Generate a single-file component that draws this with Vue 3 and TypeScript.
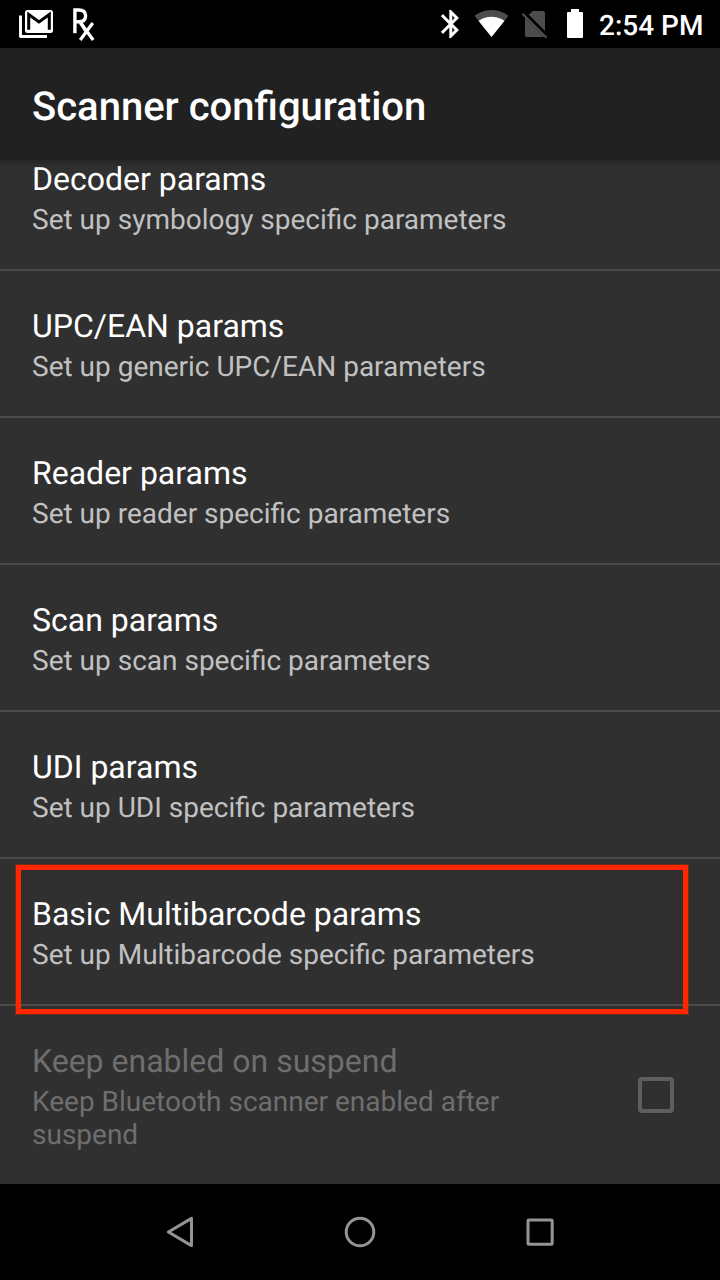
<script setup lang="ts">
interface Preference {
  title: string
  summary: string
  highlighted?: boolean
}

const preferences: Preference[] = [
  { title: 'Decoder params', summary: 'Set up symbology specific parameters' },
  { title: 'UPC/EAN params', summary: 'Set up generic UPC/EAN parameters' },
  { title: 'Reader params', summary: 'Set up reader specific parameters' },
  { title: 'Scan params', summary: 'Set up scan specific parameters' },
  { title: 'UDI params', summary: 'Set up UDI specific parameters' },
  { title: 'Basic Multibarcode params', summary: 'Set up Multibarcode specific parameters', highlighted: true },
]
</script>

<template>
  <div class="screen">
    <header class="status-bar">
      <div class="notifications">
        <svg width="36" height="48" viewBox="18 0 36 48">
          <path d="M20.5 15.5V36.5H47" fill="none" stroke="#fff" stroke-width="2.9" stroke-linejoin="round" />
          <rect x="25" y="10" width="28" height="23" rx="2.5" fill="#fff" />
          <path d="M28.7 29.7V14.5L39 22L49.3 14.5V29.7" fill="none" stroke="#000" stroke-width="3" />
        </svg>
        <svg class="rx" width="26" height="48" viewBox="71 0 26 48" fill="none" stroke="#fff" stroke-width="3.4">
          <path d="M74.9 33.3V10H78.8C83.4 10 85.6 12.2 85.6 15.8S83.4 21.8 78.8 21.8H75M80.2 22L86 31.2" />
          <path stroke-width="3.2" d="M80.2 40L92.8 23M80.6 23L93.2 40" />
        </svg>
      </div>
      <div class="system">
        <svg width="20" height="48" viewBox="440 0 20 48">
          <path transform="translate(434 7.2) scale(1.4)" fill="#fff" stroke="#fff" stroke-width=".2" d="M17.71 7.71L12 2h-1v7.59L6.41 5 5 6.41 10.59 12 5 17.59 6.41 19 11 14.41V22h1l5.71-5.71-4.3-4.29 4.3-4.29zM13 5.83l1.88 1.88L13 9.59V5.83zm1.88 10.46L13 18.17v-3.76l1.88 1.88z" />
        </svg>
        <svg class="wifi" width="36" height="48" viewBox="474 0 36 48">
          <g transform="translate(474 5.6) scale(1.46)">
            <path fill="#4d4d4d" d="M12.01 21.49L23.64 7c-.45-.34-4.93-4-11.64-4C5.28 3 .81 6.66.36 7l11.63 14.49z" />
            <path fill="#fff" d="M3.2 10.6L12 21.5l8.8-10.9C20.2 10.1 16.9 7.7 12 7.7S3.8 10.1 3.2 10.6z" />
          </g>
        </svg>
        <svg class="sim" width="28" height="48" viewBox="521 0 28 48">
          <path fill="#4d4d4d" d="M532.7 11H543Q545 11 545 13V31L528.8 14.8ZM525 17.5L544.2 36.7Q543.7 37 543 37H527Q525 37 525 35Z" />
          <path d="M522.5 13.7L546.5 37.7" stroke="#4d4d4d" stroke-width="2.2" />
        </svg>
        <svg class="battery" width="16" height="48" viewBox="567 0 16 48">
          <path fill="#fff" d="M571 9H579V12H582Q583 12 583 13V37Q583 38 582 38H568Q567 38 567 37V13Q567 12 568 12H571Z" />
        </svg>
        <span class="clock">2:54 PM</span>
      </div>
    </header>

    <div class="app-bar"><h1>Scanner configuration</h1></div>

    <main class="list">
      <section v-for="item in preferences" :key="item.title" class="item" :class="{ highlighted: item.highlighted }">
        <h2>{{ item.title }}</h2>
        <p>{{ item.summary }}</p>
      </section>
      <section class="item disabled">
        <div class="copy">
          <h2>Keep enabled on suspend</h2>
          <p>Keep Bluetooth scanner enabled after suspend</p>
        </div>
        <span class="checkbox"></span>
      </section>
    </main>

    <nav class="nav-bar">
      <svg width="36" height="36" viewBox="0 0 36 36"><path d="M6.4 18L29.5 4.4V31.6Z" /></svg>
      <svg width="36" height="36" viewBox="0 0 36 36"><circle cx="18" cy="18" r="13.8" /></svg>
      <svg width="36" height="36" viewBox="0 0 36 36"><rect x="6" y="6" width="24.2" height="24.2" rx=".8" /></svg>
    </nav>
  </div>
</template>

<style>
body {
  margin: 0;
  background: #000;
}
</style>

<style scoped>
.screen {
  display: flex;
  flex-direction: column;
  width: 720px;
  height: 1280px;
  overflow: hidden;
  background: #303030;
  color: #fff;
  font-family: Roboto, sans-serif;
  text-rendering: geometricPrecision;
}
svg {
  display: block;
  flex: none;
}
.status-bar {
  display: flex;
  justify-content: space-between;
  flex: none;
  height: 48px;
  padding: 0 16px 0 18px;
  background: #000;
}
.notifications,
.system {
  display: flex;
}
.rx {
  margin-left: 17px;
}
.wifi {
  margin-left: 14px;
}
.sim {
  margin-left: 11px;
}
.battery {
  margin-left: 18px;
}
.clock {
  width: 105px;
  margin-left: 16px;
  font-size: 28px;
  font-weight: 500;
  line-height: 52px;
  white-space: nowrap;
}
.app-bar {
  position: relative;
  z-index: 1;
  display: flex;
  align-items: center;
  flex: none;
  height: 112px;
  padding: 0 32px;
  box-sizing: border-box;
  background: #212121;
  box-shadow: 0 2px 6px rgba(0, 0, 0, 0.3);
}
h1 {
  margin: 0;
  padding-top: 6px;
  font-size: 40px;
  font-weight: 500;
  line-height: 48px;
}
.list {
  display: flex;
  flex: 1;
  flex-direction: column;
  justify-content: flex-end;
  min-height: 0;
  overflow: hidden;
}
.item {
  position: relative;
  flex: none;
  height: 147px;
  padding: 36px 32px 0;
  box-sizing: border-box;
  border-bottom: 2px solid #4b4b4b;
}
h2 {
  margin: 0;
  font-size: 32px;
  font-weight: 400;
  line-height: 38px;
}
p {
  margin: 5px 0 0;
  color: #c1c1c1;
  font-size: 28px;
  line-height: 33px;
}
.highlighted {
  z-index: 1;
}
.highlighted::after {
  content: '';
  position: absolute;
  top: 6px;
  left: 16px;
  width: 672px;
  height: 149px;
  box-sizing: border-box;
  border: 5px solid #ff2600;
  box-shadow: 0 0 0 1px rgba(255, 38, 0, 0.3);
}
.disabled {
  display: flex;
  justify-content: space-between;
  height: 178px;
  padding-right: 46px;
  border-bottom: 0;
}
.copy {
  width: 480px;
}
.disabled h2,
.disabled p {
  color: #6e6e6e;
}
.checkbox {
  width: 36px;
  height: 36px;
  margin-top: 35px;
  box-sizing: border-box;
  border: 4px solid #5e5e5e;
  border-radius: 4px;
}
.nav-bar {
  display: flex;
  align-items: center;
  justify-content: space-between;
  flex: none;
  height: 96px;
  padding: 0 162px;
  background: #000;
}
.nav-bar path,
.nav-bar circle,
.nav-bar rect {
  fill: none;
  stroke: #949494;
  stroke-width: 3;
  stroke-linejoin: round;
}
</style>
